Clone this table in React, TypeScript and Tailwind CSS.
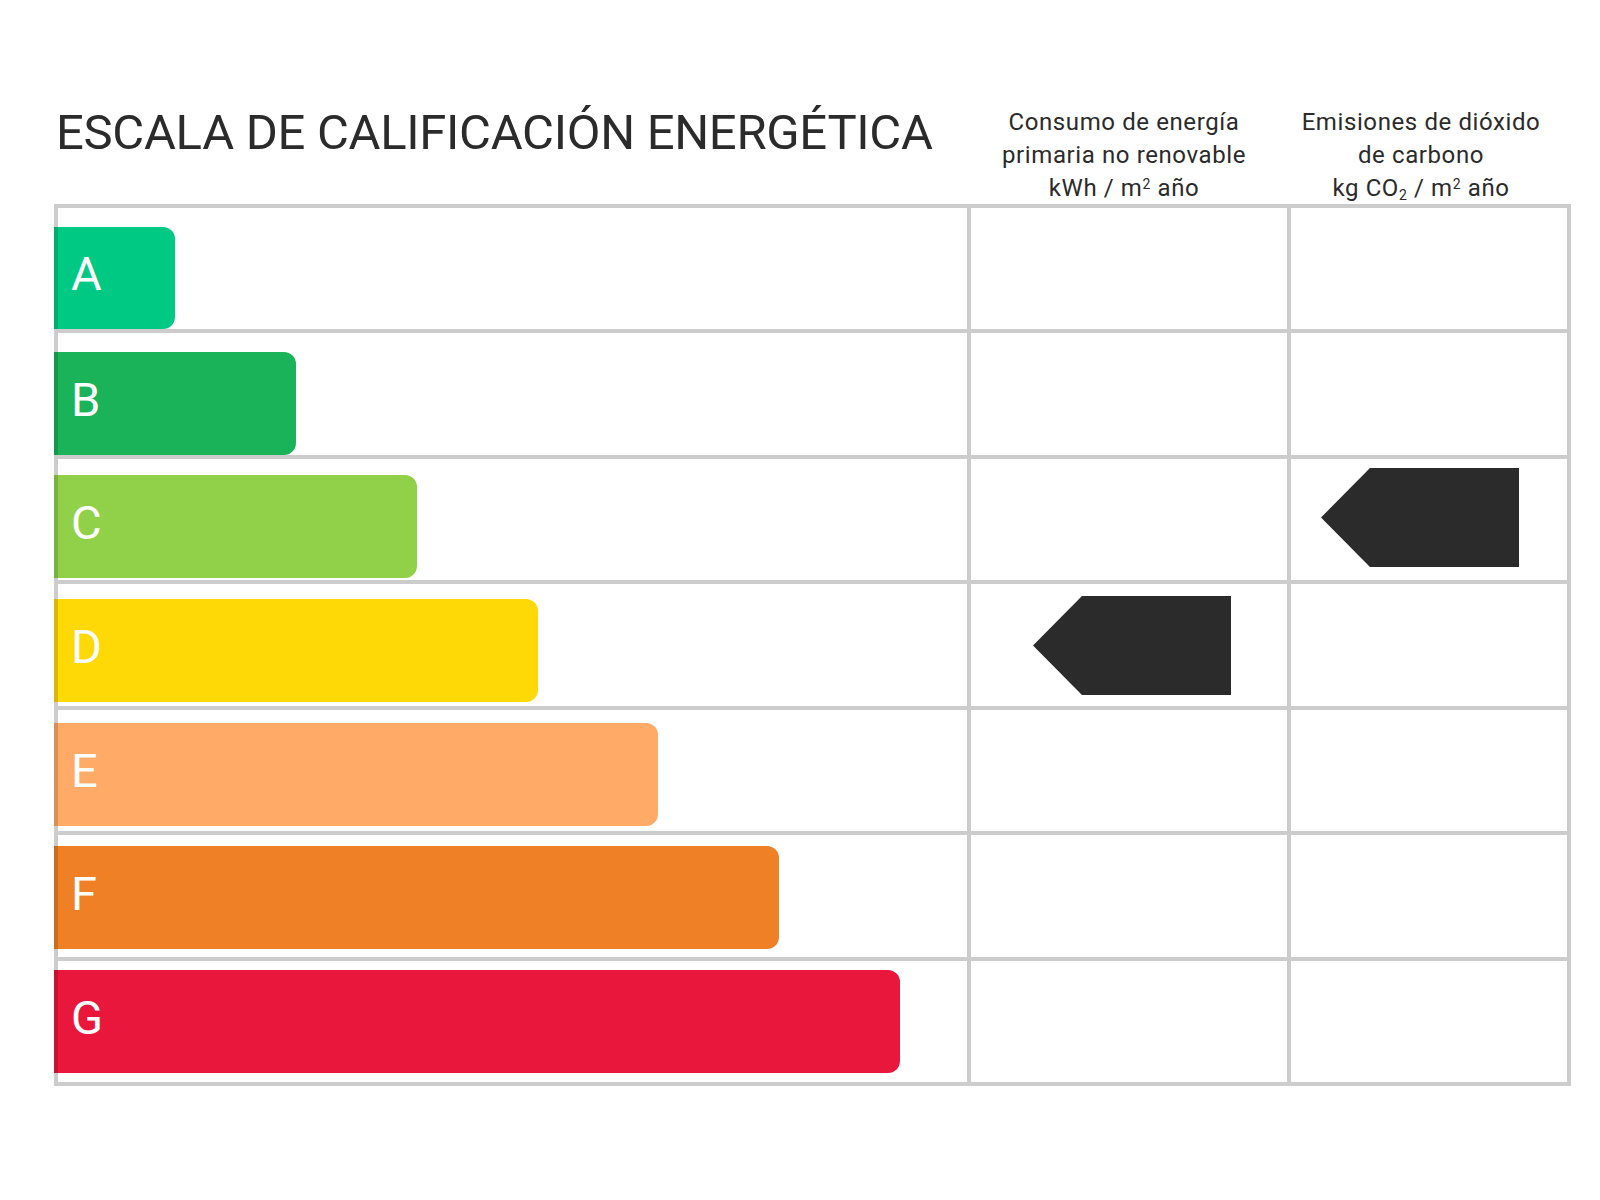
import React from "react";

type Band = {
  letter: string;
  color: string;
  width: string;
  top: string;
  rowH: string;
};

// row heights include the 4px top separator (box-sizing is border-box)
const bands: Band[] = [
  { letter: "A", color: "bg-[#00c983]", width: "w-[121px] h-[102px]", top: "mt-[19px]", rowH: "h-[121px]" },
  { letter: "B", color: "bg-[#1ab35a]", width: "w-[242px] h-[103px]", top: "mt-[19px]", rowH: "h-[126px]" },
  { letter: "C", color: "bg-[#91d149]", width: "w-[363px] h-[103px]", top: "mt-[16px]", rowH: "h-[125px]" },
  { letter: "D", color: "bg-[#ffd906]", width: "w-[484px] h-[103px]", top: "mt-[15px]", rowH: "h-[126px]" },
  { letter: "E", color: "bg-[#ffaa66]", width: "w-[604px] h-[103px]", top: "mt-[13px]", rowH: "h-[125px]" },
  { letter: "F", color: "bg-[#ef8026]", width: "w-[725px] h-[103px]", top: "mt-[11px]", rowH: "h-[126px]" },
  { letter: "G", color: "bg-[#e9173c]", width: "w-[846px] h-[103px]", top: "mt-[9px]", rowH: "h-[125px]" },
];

function Pointer({ className }: { className: string }) {
  return (
    <svg width="198" height="99" viewBox="0 0 198 99" className={className}>
      <polygon points="49,0 198,0 198,99 49,99 0,49.5" fill="#2b2b2b" />
    </svg>
  );
}

export default function App() {
  return (
    <div className="w-[1600px] h-[1200px] bg-white text-[#2b2b2b] font-['Roboto','Liberation_Sans',sans-serif]">
      <div className="pt-[106px] pl-[54px]">
        <div className="flex w-[1517px] h-[98px]">
          <div className="w-[913px] pt-[2px] pl-[2px]">
            <h1 className="text-[49px] leading-none font-normal tracking-[-0.3px] whitespace-nowrap">
              ESCALA DE CALIFICACIÓN ENERGÉTICA
            </h1>
          </div>
          <div className="w-[320px] pr-[6px] text-center text-[24px] leading-[33px] tracking-[0.6px] whitespace-nowrap">
            <div>Consumo de energía</div>
            <div>primaria no renovable</div>
            <div>
              kWh / m<sup className="text-[14px]">2</sup> año
            </div>
          </div>
          <div className="w-[284px] pr-[16px] text-center text-[24px] leading-[33px] tracking-[0.6px] whitespace-nowrap">
            <div>Emisiones de dióxido</div>
            <div>de carbono</div>
            <div>
              kg CO<sub className="text-[14px]">2</sub> / m<sup className="text-[14px]">2</sup> año
            </div>
          </div>
        </div>

        <div className="w-[1517px] border-4 border-[#cccccc]">
          {bands.map((b, i) => (
            <div
              key={b.letter}
              className={`flex ${b.rowH} ${i > 0 ? "border-t-4 border-[#cccccc]" : ""}`}
            >
              <div className="w-[913px] border-r-4 border-[#cccccc]">
                <div
                  className={`${b.width} ${b.top} ${b.color} -ml-[4px] border-l-4 border-l-black/15 rounded-r-[12px] flex items-center pl-[13px] pb-[9px]`}
                >
                  <span className="text-white text-[47px] leading-none">{b.letter}</span>
                </div>
              </div>
              <div className="w-[320px] border-r-4 border-[#cccccc]">
                {b.letter === "D" && <Pointer className="ml-[62px] mt-[12px]" />}
              </div>
              <div className="flex-1">
                {b.letter === "C" && <Pointer className="ml-[30px] mt-[9px]" />}
              </div>
            </div>
          ))}
        </div>
      </div>
    </div>
  );
}
